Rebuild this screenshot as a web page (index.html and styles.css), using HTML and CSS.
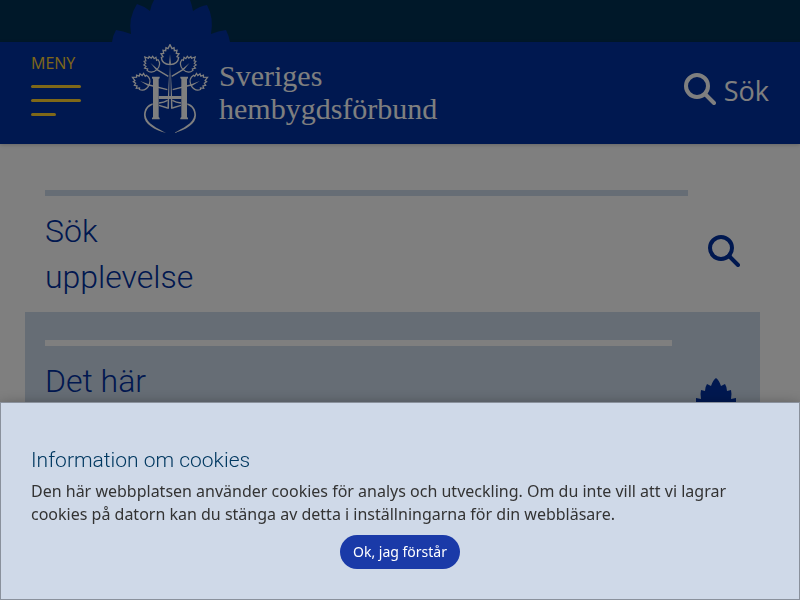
FILE: index.html
```html
<!DOCTYPE html>
<html lang="sv">
<head>
    <meta charset="UTF-8">
    <meta name="viewport" content="width=device-width, initial-scale=1.0">
    <title>Sveriges hembygdsförbund</title>
    <link rel="stylesheet" href="styles.css">
</head>
<body>
    <svg class="sprite" aria-hidden="true">
        <symbol id="search" viewBox="0 0 32 32">
            <circle cx="13" cy="13" r="11" fill="none" stroke="currentColor" stroke-width="4"/>
            <path d="M21 21L30 30" stroke="currentColor" stroke-width="4" stroke-linecap="round"/>
        </symbol>
        <symbol id="leaf" viewBox="-32 -64 64 68" overflow="visible">
            <path d="M0 0C-14 -1 -25 -9 -26 -22L-21 -24L-27 -33L-19 -34L-21 -43L-13 -42L-12 -51L-6 -48L0 -60L6 -48L12 -51L13 -42L21 -43L19 -34L27 -33L21 -24L26 -22C25 -9 14 -1 0 0Z" fill="none" stroke="currentColor" stroke-width="4"/>
            <path d="M-3 0L0 -32L3 0Z" fill="currentColor"/>
        </symbol>
    </svg>

    <div class="topbar">
        <svg class="topbar-leaf" viewBox="112 0 118 42" aria-hidden="true">
            <path d="M112 42Q113 35 116 30Q123 31 131 34Q128 18 137 4Q144 6 150 11Q151 5 154 0H190Q192 5 193 11Q200 6 207 5Q214 18 211 34Q218 31 226 30Q229 36 230 42Z" fill="currentColor"/>
        </svg>
    </div>
    <header>
        <button class="menu-btn" type="button">
            <span>MENY</span>
            <i></i>
            <i></i>
            <i class="short"></i>
        </button>
        <a class="logo" href="#">
            <svg class="emblem" viewBox="33 24 234 267" aria-hidden="true">
                <use href="#leaf" x="-32" y="-64" width="64" height="68" transform="translate(150 86)"/>
                <use href="#leaf" x="-32" y="-64" width="64" height="68" transform="translate(111 101) rotate(-44) scale(.88)"/>
                <use href="#leaf" x="-32" y="-64" width="64" height="68" transform="translate(189 101) rotate(44) scale(.88)"/>
                <use href="#leaf" x="-32" y="-64" width="64" height="68" transform="translate(87 148) rotate(-64) scale(.92)"/>
                <use href="#leaf" x="-32" y="-64" width="64" height="68" transform="translate(213 148) rotate(64) scale(.92)"/>
                <g fill="none" stroke="currentColor" stroke-width="4">
                    <path d="M111 101L145 121M87 147L142 161M189 101L155 121M213 147L158 161"/>
                    <path d="M143 216L117 208M117 201C126 200 136 197 143 193M157 216L183 208M183 201C174 200 164 197 157 193"/>
                </g>
                <g fill="currentColor">
                    <path d="M98 202C82 206 72 219 72 238C72 265 104 282 138 291C112 277 79 262 77 238C77 221 86 211 98 207Z"/>
                    <path d="M202 202C218 206 228 219 228 238C228 265 196 282 162 291C188 277 221 262 223 238C223 221 214 211 202 207Z"/>
                    <path d="M149 84L147 218H142Q145 150 149 84ZM151 84L153 218H158Q155 150 151 84Z"/>
                    <path d="M96 122H119V127L116 129V243L119 246V250H96V246L99 243V129L96 127Z"/>
                    <path d="M181 122H204V127L201 129V243L204 246V250H181V246L184 243V129L181 127Z"/>
                    <path d="M116 180H185V189H116Z"/>
                </g>
            </svg>
            <span class="logo-text">Sveriges<br>hembygdsförbund</span>
        </a>
        <a class="search-link" href="#">
            <svg class="icon" aria-hidden="true"><use href="#search"/></svg>
            <span>Sök</span>
        </a>
    </header>

    <main>
        <section class="card">
            <div class="card-text">
                <h2>Sök<br>upplevelse</h2>
            </div>
            <svg class="icon" aria-hidden="true"><use href="#search"/></svg>
        </section>
        <section class="card card-blue">
            <div class="card-text">
                <h2>Det här</h2>
            </div>
            <svg class="card-leaf" viewBox="0 0 48 48" aria-hidden="true">
                <path d="M24 1Q27 3 29 9L33 7Q35 10 35 14L39 13Q40 17 39 22L44 21Q45 34 38 40Q32 46 24 47Q16 46 10 40Q3 34 4 21L9 22Q8 17 9 13L13 14Q13 10 15 7L19 9Q21 3 24 1Z" fill="currentColor"/>
            </svg>
        </section>
    </main>

    <div class="overlay">
        <div class="cookie-box" role="dialog" aria-labelledby="cookieTitle">
            <h3 id="cookieTitle">Information om cookies</h3>
            <p>Den här webbplatsen använder cookies för analys och utveckling. Om du inte vill att vi lagrar cookies på datorn kan du stänga av detta i inställningarna för din webbläsare.</p>
            <button type="button">Ok, jag förstår</button>
        </div>
    </div>
</body>
</html>
```

FILE: styles.css
```css
* {
    box-sizing: border-box;
}
body {
    margin: 0;
    font-family: 'Noto Sans', sans-serif;
    font-size: 16px;
    background: #fff;
    overflow: hidden;
}
a {
    color: inherit;
    text-decoration: none;
}
.sprite {
    display: none;
}
.icon {
    width: 32px;
    height: 32px;
    flex-shrink: 0;
}
.topbar {
    height: 42px;
    padding-left: 112px;
    background: #003052;
}
.topbar-leaf {
    display: block;
    width: 118px;
    height: 42px;
    color: #0030a0;
}
header {
    display: flex;
    align-items: flex-start;
    height: 102px;
    padding: 0 31px;
    background: #0030a0;
    color: #fff;
    box-shadow: 0 1px 4px rgba(0, 0, 0, 0.2);
}
.menu-btn {
    display: flex;
    flex-direction: column;
    gap: 11px;
    width: 50px;
    margin-right: 50px;
    padding: 11px 0 0;
    border: none;
    background: none;
    color: #ffd030;
    font-family: 'Open Sans', sans-serif;
    font-size: 16px;
    line-height: 21px;
    text-align: left;
    cursor: pointer;
}
.menu-btn i {
    width: 50px;
    height: 3px;
    border-radius: 2px;
    background: #ffd030;
}
.menu-btn .short {
    width: 25px;
}
.logo {
    display: flex;
    gap: 10px;
    padding-top: 2px;
}
.emblem {
    width: 78px;
    height: 89px;
}
.logo-text {
    padding-top: 15px;
    font-family: 'Liberation Serif', serif;
    font-size: 30px;
    line-height: 33px;
}
.search-link {
    display: flex;
    align-items: flex-start;
    gap: 8px;
    margin-left: auto;
    padding-top: 31px;
    font-family: 'Open Sans', sans-serif;
    font-size: 27px;
    line-height: 36px;
}
main {
    padding: 18px 40px 0 25px;
}
.card {
    display: flex;
    align-items: center;
    gap: 20px;
    padding: 28px 20px 0;
    color: #0030a0;
}
.card-text {
    flex: 1;
    border-top: 6px solid #ccdaea;
}
.card h2 {
    min-height: 92px;
    margin: 12px 0;
    font-family: Roboto, sans-serif;
    font-size: 32px;
    font-weight: 300;
    line-height: 46px;
}
.card-blue {
    background: #ccdaea;
}
.card-blue .card-text {
    border-color: #fff;
}
.card-leaf {
    width: 48px;
    height: 48px;
}
.overlay {
    position: fixed;
    inset: 0;
    display: flex;
    align-items: flex-end;
    background: rgba(0, 0, 0, 0.5);
}
.cookie-box {
    width: 100%;
    padding: 42px 30px 30px;
    background: #cfd9e8;
    border: 1px solid #8a919c;
    box-shadow: 0 5px 15px rgba(0, 0, 0, 0.5);
    color: #333;
    text-align: center;
}
.cookie-box h3 {
    margin: 0 0 5px;
    color: #003860;
    font-family: Roboto, sans-serif;
    font-size: 21px;
    font-weight: 300;
    line-height: 30px;
    text-align: left;
}
.cookie-box p {
    margin: 0 0 9px;
    line-height: 23px;
    text-align: left;
}
.cookie-box button {
    padding: 7px 13px;
    border: none;
    border-radius: 17px;
    background: #1a3aa8;
    color: #fff;
    font-family: inherit;
    font-size: 14px;
    line-height: 20px;
    cursor: pointer;
}
```
